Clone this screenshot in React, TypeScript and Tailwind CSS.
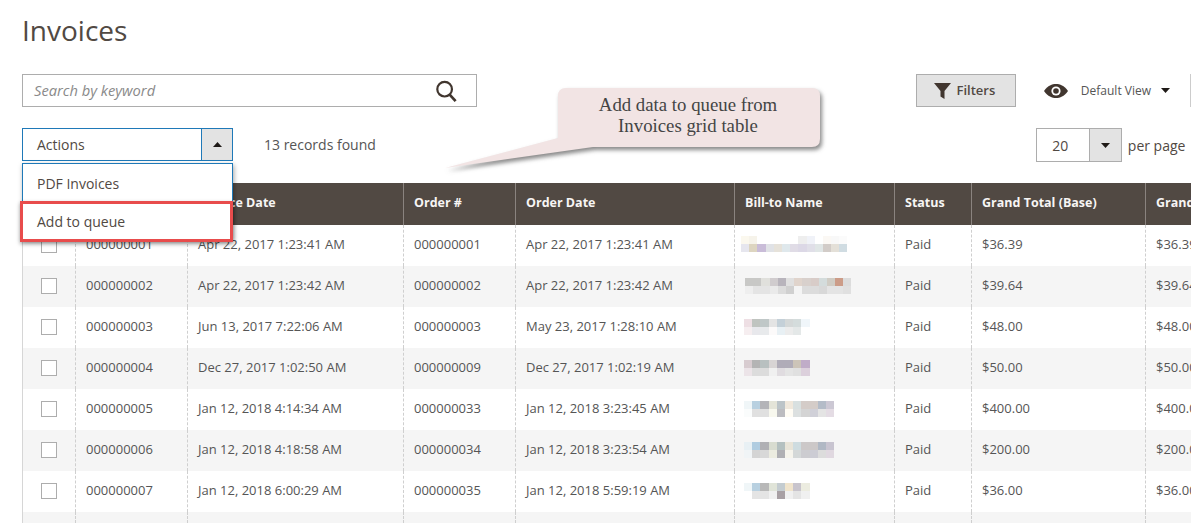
const rows = [
  ['000000001', 'Apr 22, 2017 1:23:41 AM', '000000001', 'Apr 22, 2017 1:23:41 AM', '$36.39'],
  ['000000002', 'Apr 22, 2017 1:23:42 AM', '000000002', 'Apr 22, 2017 1:23:42 AM', '$39.64'],
  ['000000003', 'Jun 13, 2017 7:22:06 AM', '000000003', 'May 23, 2017 1:28:10 AM', '$48.00'],
  ['000000004', 'Dec 27, 2017 1:02:50 AM', '000000009', 'Dec 27, 2017 1:02:19 AM', '$50.00'],
  ['000000005', 'Jan 12, 2018 4:14:34 AM', '000000033', 'Jan 12, 2018 3:23:45 AM', '$400.00'],
  ['000000006', 'Jan 12, 2018 4:18:58 AM', '000000034', 'Jan 12, 2018 3:23:54 AM', '$200.00'],
  ['000000007', 'Jan 12, 2018 6:00:29 AM', '000000035', 'Jan 12, 2018 5:59:19 AM', '$36.00'],
];

// blurred customer names, one list of colours per line of cells
const names = [
  [
    ['#fbf8ee', '#f6f3ea', '#ffffff', '#ffffff', '#ffffff', '#ffffff', '#ffffff', '#eeeeee', '#f0f2f8', '#ffffff', '#fbf8f4', '#f8f8f8', '#fbfbfb'],
    ['#e6e6ee', '#ddd5c0', '#c9bcd8', '#e0e2e6', '#e6e2da', '#dfe8ec', '#e0dce6', '#dcd8e6', '#e0dfe8', '#e0e6e6', '#d2ccc8', '#e4e0d8', '#d0dce2'],
  ],
  [
    ['#c8c8c6', '#c8c8c6', '#e0e0dc', '#d0ccce', '#b8b4bc', '#e0e0e0', '#e0d4cc', '#d8d0cc', '#d8ccc8', '#d4dcdc', '#d0ccc4', '#cc9c88', '#dcdcdc'],
    ['#eeeeee', '#e4e4e4', '#e4e4e4', '#eaeaea', '#dcdcdc', '#d0d0d0', '#f4f4f4', '#dcdcdc', '#dcdcdc', '#d8d8d8', '#e4e4e4', '#e4e4e4', '#e0e0e0'],
  ],
  [
    ['#eedfe4', '#c0c4c0', '#c0c8c8', '#e4e4e4', '#c4d0d8', '#d4d8d8', '#d4dcdc', '#f0f6fa'],
    ['#f6eef0', '#e8e8ec', '#e8eaec', '#fcfafa', '#e8f0f4', '#ececec', '#e4e8e8', '#ffffff'],
  ],
  [
    ['#d8ccd0', '#b4b4b4', '#b8c0c0', '#d8d4d4', '#b0acb8', '#b0acb8', '#ccc4b8', '#c0acc8'],
    ['#ece4e8', '#dcdcdc', '#dcdcdc', '#f0f0f0', '#e0dce0', '#e4e4e4', '#e0e0e0', '#dcd0dc'],
  ],
  [
    ['#f0f6f8', '#b8d0e0', '#b4b4b8', '#e4e4d8', '#bcc4c8', '#f0e8dc', '#d8e0e0', '#d4ccc8', '#d4ccc8', '#b4bcc8', '#ccc8d4'],
    ['#fafcfc', '#e0e0e0', '#e0e0e0', '#f8f8ee', '#bcbcc0', '#fffcf4', '#dce0e0', '#d4d4d4', '#d0d0d8', '#e4e4e4', '#e4dce4'],
  ],
  [
    ['#e8f0f4', '#b0cce0', '#b0b0b4', '#d8dcd0', '#b4c0c0', '#e8e4d8', '#cedce0', '#ccc8c8', '#ccc8c8', '#b0b8c4', '#c8c4d0'],
    ['#f0f4f6', '#d4d4d4', '#d8d8d8', '#ecece0', '#b0b0b4', '#f6f4ec', '#d4d8d8', '#ccccd0', '#ccccd4', '#dcdcdc', '#e0d8e0'],
  ],
  [
    ['#f0f6f8', '#b8d0e0', '#b8b8b8', '#e0e4d8', '#c4ccd0', '#f0e4cc', '#c8c4cc', '#ecece0'],
    ['#ffffff', '#e4e4e4', '#e4e4e4', '#f0f0f0', '#a8a0a4', '#f0f0f0', '#e4e4e4', '#f0f0f0'],
  ],
];

const nameOffsets = ['mt-[-2px]', 'ml-1', 'ml-[3px]', 'ml-[3px]', 'ml-[3px]', 'ml-[3px]', 'ml-[3px]'];

const headers = ['', 'Invoice', 'Invoice Date', 'Order #', 'Order Date', 'Bill-to Name', 'Status', 'Grand Total (Base)', 'Grand Total (Purchased)'];

const gridCols = 'grid grid-cols-[52px_112px_216px_112px_219px_160px_77px_174px_174px] w-[1296px]';

function Caret({ up = false }: { up?: boolean }) {
  return (
    <svg width="9" height="5" viewBox="0 0 9 5" className="block">
      <path d={up ? 'M0 5 L4.5 0 L9 5 Z' : 'M0 0 L9 0 L4.5 5 Z'} fill="#1f1a17" />
    </svg>
  );
}

function BlurName({ index }: { index: number }) {
  return (
    <div className={`flex flex-col ${nameOffsets[index]}`}>
      {names[index].map((line, i) => (
        <div key={i} className="flex">
          {line.map((c, j) => (
            <span key={j} className="block h-2 w-[8.2px]" style={{ backgroundColor: c }} />
          ))}
        </div>
      ))}
    </div>
  );
}

export default function App() {
  return (
    <div className="relative h-[523px] w-[1191px] overflow-hidden bg-white font-['Open_Sans',sans-serif] text-[13px] text-[#555555]">
      <div className="pl-[22px]">
        <h1 className="pt-[10px] pb-[1px] text-[28px] leading-[40px] text-[#514943]">Invoices</h1>

        <div className="mt-[23px] flex h-[33px] items-start">
          <div className="flex h-[33px] w-[455px] items-center justify-between border border-[#adadad] pl-[11px] pr-[19px]">
            <span className="text-[14.7px] italic text-[#8a8a8a]">Search by keyword</span>
            <svg width="22" height="22" viewBox="0 0 24 24" fill="none" stroke="#41362f" strokeWidth="2.4" className="mt-[1px]">
              <circle cx="10.5" cy="10" r="8" />
              <path d="M16 16 L22.5 23" strokeWidth="3" />
            </svg>
          </div>
          <button className="ml-[439px] flex h-[33px] w-[100px] items-center justify-center gap-[5px] border border-[#adadad] bg-[#e3e3e3] pr-[2px] text-[13px] font-semibold text-[#514943]">
            <svg width="17" height="16" viewBox="0 0 17 16" fill="#41362f">
              <path d="M0 0 H17 L10.5 8 V16 L6.5 13.5 V8 Z" />
            </svg>
            Filters
          </button>
          <div className="ml-[28px] flex h-[33px] items-center">
            <svg width="24" height="14" viewBox="0 0 24 14">
              <path d="M0 7 C4 1.5 8 0 12 0 C16 0 20 1.5 24 7 C20 12.5 16 14 12 14 C8 14 4 12.5 0 7 Z" fill="#41362f" />
              <circle cx="12" cy="7" r="4.6" fill="#ffffff" />
              <circle cx="12" cy="7" r="2.8" fill="#41362f" />
            </svg>
            <span className="ml-[13px] whitespace-nowrap text-[12px] text-[#555555]">Default View</span>
            <span className="ml-[10px]"><Caret /></span>
            <span className="ml-[20px] h-[33px] w-px shrink-0 bg-[#cccccc]" />
          </div>
        </div>

        <div className="mt-[21px] flex h-[34px] items-start">
          <div className="relative">
            <div className="flex h-[33px] w-[211px] border border-[#1f79b8]">
              <span className="flex flex-1 items-center pl-[14px] text-[14px] text-[#514943]">Actions</span>
              <span className="flex w-[31px] items-center justify-center border-l border-[#1f79b8] bg-[#e3e3e3]"><Caret up /></span>
            </div>
            <div className="absolute left-0 top-[35px] z-20 h-[76px] w-[211px] border border-b-0 border-[#1f79b8] bg-white text-[14px] text-[#514943] shadow-[1px_2px_5px_rgba(0,0,0,0.35)]">
              <div className="flex h-[39px] items-center pl-[14px]">PDF Invoices</div>
              <div className="flex h-[37px] items-center pl-[14px]">Add to queue</div>
            </div>
            <div className="absolute left-[-2px] top-[73px] z-30 h-[41px] w-[213px] border-[3px] border-[#e84c4c] shadow-[0_2px_4px_rgba(0,0,0,0.35)]" />
          </div>
          <span className="ml-[31px] flex h-[33px] items-center text-[14px] text-[#555555]">13 records found</span>
          <div className="ml-[660px] flex h-[34px] w-[86px] border border-[#adadad]">
            <span className="flex flex-1 items-center justify-center pr-[5px] text-[14px] text-[#514943]">20</span>
            <span className="flex w-[32px] items-center justify-center border-l border-[#adadad] bg-[#e3e3e3]"><Caret /></span>
          </div>
          <span className="ml-[6px] flex h-[34px] items-center whitespace-nowrap text-[14px] text-[#514943]">per page</span>
        </div>

        <div className="mt-[21px] border-l border-[#d6d6d6]">
          <div className={`${gridCols} h-[42px] bg-[#514943] text-[12.5px] font-bold text-[#f7f5f4]`}>
            {headers.map((h, i) => (
              <div key={i} className={`flex items-center whitespace-nowrap pb-[1px] pl-[10px] ${i > 0 ? 'border-l border-[#8a837f]' : ''}`}>
                {h}
              </div>
            ))}
          </div>
          {rows.map((r, i) => (
            <div key={r[0]} className={`${gridCols} h-[41px] ${i % 2 === 1 ? 'bg-[#f5f5f5]' : 'bg-white'} text-[13px]`}>
              <div className="flex items-center pl-[18px] pb-[1px]">
                <span className="block h-[16px] w-[16px] border border-[#adadad] bg-white" />
              </div>
              {[r[0], r[1], r[2], r[3]].map((v, j) => (
                <div key={j} className="flex items-center whitespace-nowrap border-l border-dashed border-[#cfcfcf] pl-[10px] pb-[1px]">{v}</div>
              ))}
              <div className="flex items-center border-l border-dashed border-[#cfcfcf] pl-[6px] pb-[1px]">
                <BlurName index={i} />
              </div>
              <div className="flex items-center border-l border-dashed border-[#cfcfcf] pl-[10px] pb-[1px]">Paid</div>
              <div className="flex items-center border-l border-dashed border-[#cfcfcf] pl-[10px] pb-[1px]">{r[4]}</div>
              <div className="flex items-center border-l border-dashed border-[#cfcfcf] pl-[10px] pb-[1px]">{r[4]}</div>
            </div>
          ))}
          <div className={`${gridCols} h-[11px] bg-[#f5f5f5]`}>
            {headers.map((_, i) => (
              <div key={i} className={i > 0 ? 'border-l border-dashed border-[#cfcfcf]' : ''} />
            ))}
          </div>
        </div>
      </div>

      {/* callout pointing at the grid's action menu */}
      <div className="absolute left-[440px] top-[84px] z-10 h-[92px] w-[390px]">
        <svg width="390" height="92" viewBox="0 0 390 92" className="absolute inset-0 drop-shadow-[2px_3px_2px_rgba(40,40,40,0.55)]">
          <path
            d="M126 4 H372 Q380 4 380 12 V55 Q380 63 372 63 H153 L5 84 L118 54 V12 Q118 4 126 4 Z"
            fill="#f2e4e4"
          />
        </svg>
        <p className="absolute left-[117px] top-[10px] w-[262px] text-center font-['Liberation_Serif',serif] text-[18.8px] leading-[21px] text-[#444444]">
          Add data to queue from
          <br />
          Invoices grid table
        </p>
      </div>
    </div>
  );
}
